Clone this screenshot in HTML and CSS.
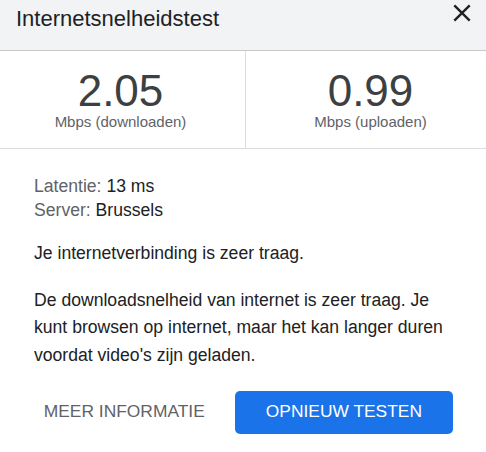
FILE: index.html
```html
<!DOCTYPE html>
<html lang="nl">
<head>
<meta charset="utf-8">
<title>Internetsnelheidstest</title>
<link rel="stylesheet" href="styles.css">
</head>
<body>
<div class="dialog">
  <header class="header">
    <h1 class="title">Internetsnelheidstest</h1>
    <button class="close" aria-label="Sluiten">
      <svg width="18" height="18" viewBox="0 0 18 18" aria-hidden="true">
        <path d="M1.3 1.3 L16.7 16.7 M16.7 1.3 L1.3 16.7" stroke="#202124" stroke-width="2.4" fill="none"/>
      </svg>
    </button>
  </header>
  <section class="stats">
    <div class="stat stat-down">
      <div class="value">2.05</div>
      <div class="unit">Mbps (downloaden)</div>
    </div>
    <div class="stat stat-up">
      <div class="value">0.99</div>
      <div class="unit">Mbps (uploaden)</div>
    </div>
  </section>
  <section class="content">
    <div class="info">
      <div class="info-row"><span class="key">Latentie:</span> 13 ms</div>
      <div class="info-row"><span class="key">Server:</span> Brussels</div>
    </div>
    <p class="text text-first">Je internetverbinding is zeer traag.</p>
    <p class="text text-second">De downloadsnelheid van internet is zeer traag. Je kunt browsen op internet, maar het kan langer duren voordat video's zijn geladen.</p>
    <div class="actions">
      <button class="btn btn-flat">MEER INFORMATIE</button>
      <button class="btn btn-primary">OPNIEUW TESTEN</button>
    </div>
  </section>
</div>
</body>
</html>
```
FILE: styles.css
```css
* { box-sizing: border-box; }
html, body {
  margin: 0;
  padding: 0;
  background: #ffffff;
}
body {
  font-family: "Liberation Sans", Arial, sans-serif;
  color: #202124;
}
.dialog {
  width: 486px;
  height: 452px;
  overflow: hidden;
  background: #ffffff;
}
.header {
  display: flex;
  justify-content: space-between;
  align-items: flex-start;
  height: 51px;
  background: #f1f3f4;
  border-bottom: 1px solid #c6c8cb;
  padding: 6px 15px 0 16px;
}
.title {
  margin: 0;
  font-size: 22px;
  line-height: 26px;
  font-weight: normal;
  color: #202124;
}
.close {
  border: 0;
  background: transparent;
  padding: 0;
  margin-top: -2px;
  width: 18px;
  height: 18px;
  display: block;
}
.close svg { display: block; }
.stats {
  display: grid;
  grid-template-columns: 246px 1fr;
  border-bottom: 1px solid #dadce0;
  height: 98px;
}
.stat {
  text-align: center;
  padding-top: 18px;
}
.stat-down {
  border-right: 1px solid #dadce0;
  padding-right: 4px;
}
.stat-up {
  padding-left: 9px;
}
.value {
  font-size: 44px;
  line-height: 44px;
  color: #3c4043;
}
.unit {
  font-size: 15px;
  line-height: 18px;
  color: #5f6368;
}
.content {
  padding: 24.5px 33px 0 34px;
  font-size: 17.6px;
}
.info-row {
  line-height: 24.2px;
  color: #202124;
}
.key { color: #5f6368; }
.text {
  margin: 0;
  line-height: 27.5px;
  color: #202124;
}
.text-first { margin-top: 18.3px; }
.text-second { margin-top: 19.2px; }
.actions {
  display: flex;
  justify-content: flex-end;
  align-items: center;
  gap: 21px;
  margin-top: 21.6px;
}
.btn {
  font-family: "Liberation Sans", Arial, sans-serif;
  font-size: 17.4px;
  border: 0;
  height: 43px;
  line-height: 40px;
  padding: 0 31px 3px;
  border-radius: 5px;
  background: transparent;
}
.btn-flat {
  color: #5f6368;
  padding: 0 9px 3px;
}
.btn-primary {
  background: #1a73e8;
  color: #ffffff;
}
```
